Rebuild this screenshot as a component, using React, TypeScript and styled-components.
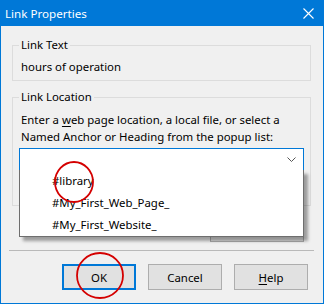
import React from "react";
import styled, { createGlobalStyle } from "styled-components";

const Global = createGlobalStyle`
  html, body { margin: 0; padding: 0; background: #f0f0f0; }
  * { box-sizing: border-box; }
`;

const FONT = `"Segoe UI", "Noto Sans", "Liberation Sans", sans-serif`;

const Window = styled.div`
  position: relative;
  width: 324px;
  height: 304px;
  display: flex;
  flex-direction: column;
  background: #f0f0f0;
  border: 1px solid #0078d7;
  border-top: none;
  font-family: ${FONT};
  font-size: 11.4px;
  color: #000;
  overflow: hidden;
`;

const TitleBar = styled.div`
  height: 26px;
  margin: 0 -1px;
  background: #0078d7;
  color: #fff;
  display: flex;
  align-items: center;
  justify-content: space-between;
  padding: 0 10px 0 5px;
  font-size: 11.6px;
`;

const Body = styled.div`
  display: flex;
  flex-direction: column;
  padding: 11px 12px 13px 11px;
  flex: 1;
`;

const Group = styled.fieldset<{ $gap?: number; $bottom?: number }>`
  margin: ${(p) => p.$gap ?? 0}px 0 0 0;
  padding: 0 6px ${(p) => p.$bottom ?? 5}px 6px;
  border: 1px solid #dcdcdc;
  min-width: 0;
`;

const Legend = styled.legend`
  padding: 0 2px;
  line-height: 16px;
  height: 16px;
`;

const Text = styled.div<{ $top?: number; $lh?: number }>`
  padding-left: 2px;
  margin-top: ${(p) => p.$top ?? 0}px;
  line-height: ${(p) => p.$lh ?? 16}px;
  white-space: nowrap;
`;

const Combo = styled.div`
  position: relative;
  margin-top: 3px;
  height: 23px;
  border: 1px solid #0078d7;
  background: #fff;
  display: flex;
  align-items: center;
  justify-content: flex-end;
  padding-right: 7px;
`;

const Popup = styled.div`
  position: absolute;
  top: 100%;
  left: -1px;
  right: -1px;
  background: #fff;
  border: 1px solid #6e6e6e;
  border-top: none;
  box-shadow: 4px 4px 3px rgba(0, 0, 0, 0.35);
  z-index: 5;
`;

const Item = styled.div`
  height: 22px;
  line-height: 22px;
  padding-left: 32px;
  white-space: nowrap;
`;

const HiddenRow = styled.div`
  display: flex;
  justify-content: flex-end;
  margin-top: 12px;
  padding-right: 7px;
`;

const Button = styled.button<{ $default?: boolean; $w?: number; $h?: number }>`
  width: ${(p) => p.$w ?? 74}px;
  height: ${(p) => p.$h ?? 26}px;
  background: #e1e1e1;
  border: ${(p) => (p.$default ? "2px solid #0078d7" : "1px solid #adadad")};
  font-family: ${FONT};
  font-size: 11.4px;
  color: #000;
  padding: 0;
  display: flex;
  align-items: center;
  justify-content: center;
`;

const Separator = styled.div`
  height: 1px;
  background: #b9b9b9;
  margin: 8px -3px 0 -3px;
`;

const ButtonRow = styled.div`
  display: flex;
  justify-content: flex-end;
  gap: 12px;
  margin-top: 13px;
  padding-right: 3px;
`;

const Marks = styled.svg`
  position: absolute;
  left: -1px;
  top: 0;
  pointer-events: none;
  z-index: 10;
`;

const Underlined = styled.span`
  text-decoration: underline;
  text-underline-offset: 2px;
`;

export default function App() {
  return (
    <>
      <Global />
      <Window>
        <TitleBar>
          <span>Link Properties</span>
          <svg width="11" height="11" viewBox="0 0 11 11">
            <path d="M0.5 0.5 L10.5 10.5 M10.5 0.5 L0.5 10.5" stroke="#fff" strokeWidth="1.1" />
          </svg>
        </TitleBar>
        <Body>
          <Group>
            <Legend>Link Text</Legend>
            <Text $top={6}>hours of operation</Text>
          </Group>
          <Group $gap={8} $bottom={34}>
            <Legend>Link Location</Legend>
            <Text $top={6} $lh={17}>
              Enter a <Underlined>w</Underlined>eb page location, a local file, or select a
            </Text>
            <Text $lh={17}>Named Anchor or Heading from the popup list:</Text>
            <Combo>
              <svg width="9" height="5" viewBox="0 0 9 5">
                <path d="M0.5 0.5 L4.5 4.5 L8.5 0.5" fill="none" stroke="#555" strokeWidth="1" />
              </svg>
              <Popup>
                <Item>#library</Item>
                <Item>#My_First_Web_Page_</Item>
                <Item>#My_First_Website_</Item>
              </Popup>
            </Combo>
          </Group>
          <HiddenRow>
            <Button $w={94} $h={24}>Advanced Edit...</Button>
          </HiddenRow>
          <Separator />
          <ButtonRow>
            <Button $default>OK</Button>
            <Button>Cancel</Button>
            <Button>
              <Underlined>H</Underlined>elp
            </Button>
          </ButtonRow>
        </Body>
        <Marks width="324" height="304" viewBox="0 0 324 304">
          <ellipse cx="74" cy="182" rx="19" ry="20" fill="none" stroke="#d40000" strokeWidth="1.8" />
          <ellipse cx="100" cy="275.5" rx="23" ry="22.5" fill="none" stroke="#d40000" strokeWidth="1.8" />
        </Marks>
      </Window>
    </>
  );
}
